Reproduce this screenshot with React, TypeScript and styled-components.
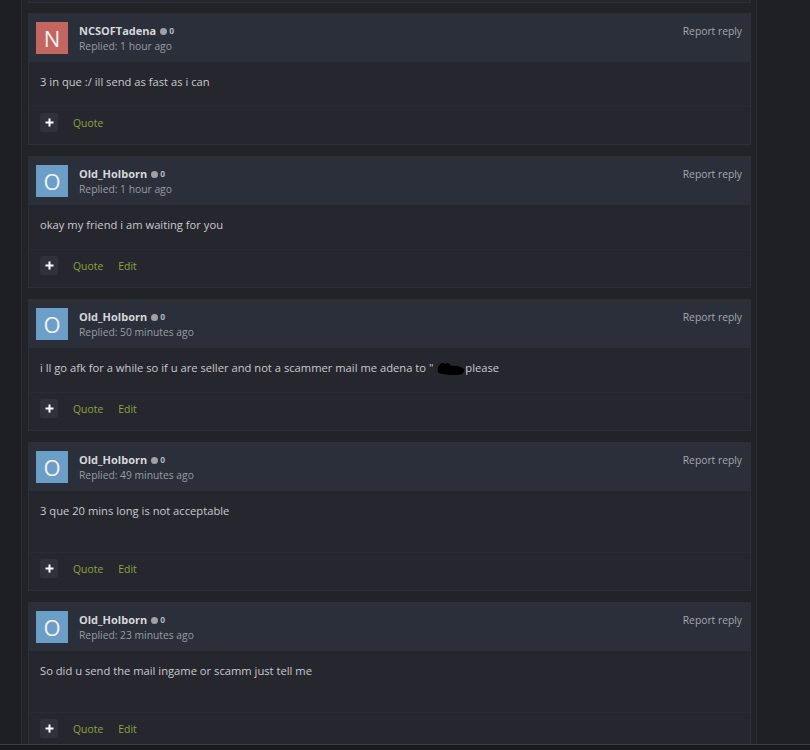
import React from "react";
import styled, { createGlobalStyle } from "styled-components";

const GlobalStyle = createGlobalStyle`
  html, body { margin: 0; padding: 0; background: #1e1f25; }
  body { font-family: "Open Sans", "Noto Sans", "DejaVu Sans", sans-serif; -webkit-font-smoothing: antialiased; }
  * { box-sizing: border-box; }
`;

const Screen = styled.div`
  width: 810px;
  height: 750px;
  display: flex;
  flex-direction: column;
  overflow: hidden;
`;

const Viewport = styled.div`
  height: 745px;
  flex: none;
  display: flex;
  overflow: hidden;
  border-bottom: 1px solid #3a3b43;
`;

const BottomStrip = styled.div`
  flex: 1;
  background: #1a1b20;
`;

const LeftGutter = styled.div`
  width: 22px;
  flex: none;
  background: #1e1f25;
  border-right: 1px solid #2b2c34;
`;

const Main = styled.main`
  width: 735px;
  flex: none;
  background: #222329;
  border-right: 1px solid #2b2c34;
  padding: 0 5px 0 6px;
  display: flex;
  flex-direction: column;
  gap: 11px;
`;

const RightArea = styled.div`
  flex: 1;
  background: #1f2026;
`;

const CardTail = styled.div`
  height: 3px;
  flex: none;
  margin-bottom: -1px;
  background: #25262e;
  border: 1px solid #2d2f38;
  border-top: none;
`;

const Card = styled.article`
  flex: none;
  background: #25262e;
  border: 1px solid #2d2f38;
`;

const Header = styled.header`
  display: flex;
  align-items: flex-start;
  padding: 8px 8px 8px 7px;
  background: #2b2f3a;
`;

const Avatar = styled.div<{ $bg: string }>`
  width: 32px;
  height: 32px;
  flex: none;
  background: ${(p) => p.$bg};
  color: #f4f1f1;
  font-size: 22px;
  line-height: 32px;
  text-align: center;
  font-weight: 400;
`;

const AuthorInfo = styled.div`
  margin-left: 11px;
  padding-top: 1px;
  display: flex;
  flex-direction: column;
`;

const NameRow = styled.div`
  display: flex;
  align-items: center;
  gap: 4px;
  height: 16px;
`;

const Name = styled.span`
  font-size: 11px;
  line-height: 16px;
  font-weight: 700;
  color: #d6d7da;
`;

const Rep = styled.span`
  display: inline-flex;
  align-items: center;
  gap: 2px;
  font-size: 8.5px;
  line-height: 16px;
  font-weight: 700;
  color: #b4b6bb;
`;

const RepDot = styled.span`
  width: 7px;
  height: 7px;
  border-radius: 50%;
  background: #9fa1a6;
`;

const Meta = styled.span`
  font-size: 10.3px;
  line-height: 15px;
  color: #9a9ca3;
`;

const ReportLink = styled.a`
  margin-left: auto;
  padding-top: 1px;
  font-size: 10.3px;
  line-height: 16px;
  color: #a5a7ac;
  text-decoration: none;
`;

const Body = styled.div<{ $extra?: boolean }>`
  padding: 11px 11px ${(p) => (p.$extra ? "33px" : "16px")};
  font-size: 11.2px;
  line-height: 17px;
  color: #c9cacd;
`;

const Footer = styled.footer`
  display: flex;
  align-items: center;
  padding: 6px 11px 12px;
  border-top: 1px solid #292b33;
`;

const PlusButton = styled.button`
  width: 18px;
  height: 19px;
  padding: 0;
  border: none;
  border-radius: 2px;
  background: #30313a;
  display: flex;
  align-items: center;
  justify-content: center;
`;

const Action = styled.a`
  margin-left: 15px;
  font-size: 10.4px;
  line-height: 16px;
  color: #89a73c;
  text-decoration: none;
`;

const Redact = styled.svg`
  display: inline-block;
  vertical-align: middle;
  margin: 0 0 0 4px;
`;

type Post = {
  name: string;
  letter: string;
  color: string;
  time: string;
  text: React.ReactNode;
  edit: boolean;
  extra?: boolean;
};

const NCSOFT = "#c2665f";
const BLUE = "#6b9fc8";

const posts: Post[] = [
  { name: "NCSOFTadena", letter: "N", color: NCSOFT, time: "1 hour ago", text: "3 in que :/ ill send as fast as i can", edit: false },
  { name: "Old_Holborn", letter: "O", color: BLUE, time: "1 hour ago", text: "okay my friend i am waiting for you", edit: true },
  {
    name: "Old_Holborn",
    letter: "O",
    color: BLUE,
    time: "50 minutes ago",
    text: (
      <>
        i ll go afk for a while so if u are seller and not a scammer mail me adena to "
        <Redact width="28" height="14" viewBox="0 0 28 14">
          <path d="M1 6 C2 1 6 0 8 2 C10 0 13 1 14 4 C17 3 24 4 27 7 C28 10 25 13 20 13 C15 13 11 13 6 12 C2 12 0 10 1 6 Z" fill="#000" />
        </Redact>
        please
      </>
    ),
    edit: true,
  },
  { name: "Old_Holborn", letter: "O", color: BLUE, time: "49 minutes ago", text: "3 que 20 mins long is not acceptable", edit: true, extra: true },
  { name: "Old_Holborn", letter: "O", color: BLUE, time: "23 minutes ago", text: "So did u send the mail ingame or scamm just tell me", edit: true, extra: true },
];

const PlusIcon = () => (
  <svg width="9" height="9" viewBox="0 0 9 9">
    <rect x="3.5" y="0.5" width="2" height="8" fill="#ffffff" />
    <rect x="0.5" y="3.5" width="8" height="2" fill="#ffffff" />
  </svg>
);

const Reply = ({ post }: { post: Post }) => (
  <Card>
    <Header>
      <Avatar $bg={post.color}>{post.letter}</Avatar>
      <AuthorInfo>
        <NameRow>
          <Name>{post.name}</Name>
          <Rep>
            <RepDot />0
          </Rep>
        </NameRow>
        <Meta>Replied: {post.time}</Meta>
      </AuthorInfo>
      <ReportLink href="#">Report reply</ReportLink>
    </Header>
    <Body $extra={post.extra}>{post.text}</Body>
    <Footer>
      <PlusButton aria-label="More">
        <PlusIcon />
      </PlusButton>
      <Action href="#">Quote</Action>
      {post.edit && <Action href="#">Edit</Action>}
    </Footer>
  </Card>
);

export default function App() {
  return (
    <>
      <GlobalStyle />
      <Screen>
        <Viewport>
          <LeftGutter />
          <Main>
            <CardTail />
            {posts.map((p, i) => (
              <Reply key={i} post={p} />
            ))}
          </Main>
          <RightArea />
        </Viewport>
        <BottomStrip />
      </Screen>
    </>
  );
}
